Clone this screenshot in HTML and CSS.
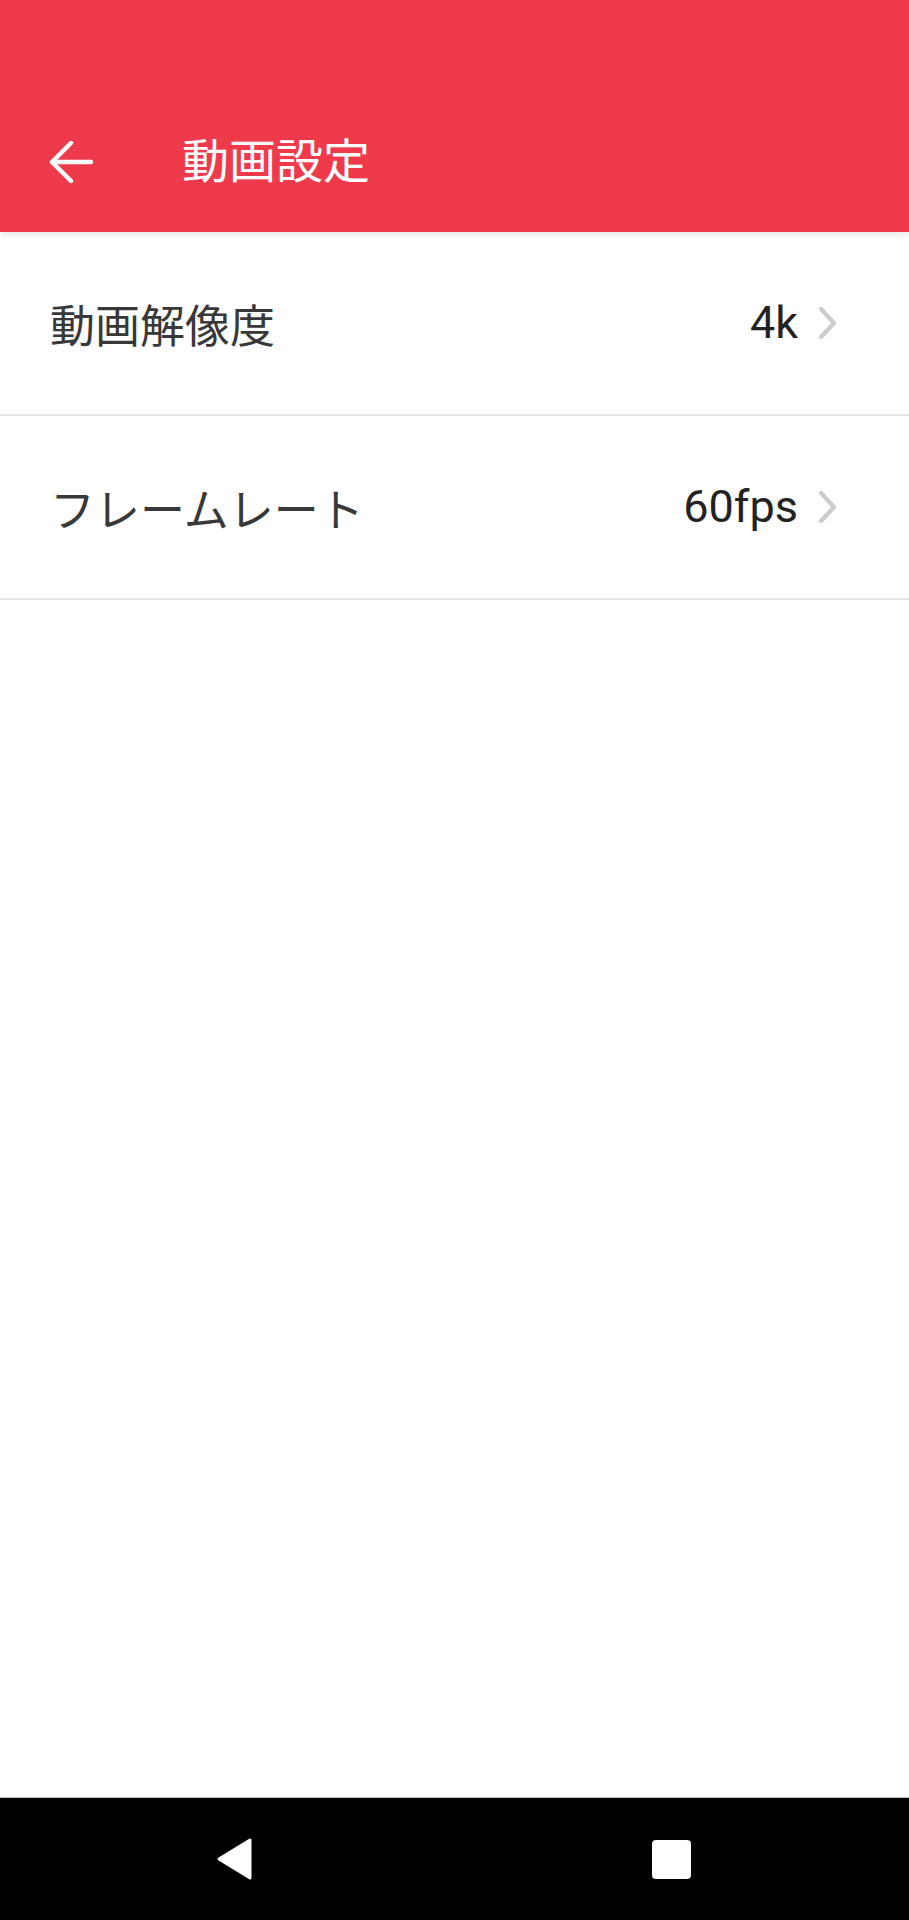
FILE: index.html
```html
<!DOCTYPE html>
<html lang="ja">
<head>
<meta charset="utf-8">
<title>動画設定</title>
<link rel="stylesheet" href="styles.css">
</head>
<body>
<div class="screen">
  <header class="appbar">
    <div class="toolbar">
      <span class="back">
        <svg width="46" height="44" viewBox="0 0 46 44">
          <path d="M4 22 H43 M23 3 L4 22 L23 41" fill="none" stroke="#fff" stroke-width="4.4" stroke-linecap="round" stroke-linejoin="round"/>
        </svg>
      </span>
      <h1 class="title">動画設定</h1>
    </div>
  </header>
  <main class="list">
    <div class="row">
      <span class="label">動画解像度</span>
      <span class="value">4k</span>
      <svg class="chev" width="22" height="34" viewBox="0 0 22 34"><path d="M4 3 L17 17 L4 31" fill="none" stroke="#cccccc" stroke-width="4.2" stroke-linecap="round" stroke-linejoin="round"/></svg>
    </div>
    <div class="row">
      <span class="label">フレームレート</span>
      <span class="value">60fps</span>
      <svg class="chev" width="22" height="34" viewBox="0 0 22 34"><path d="M4 3 L17 17 L4 31" fill="none" stroke="#cccccc" stroke-width="4.2" stroke-linecap="round" stroke-linejoin="round"/></svg>
    </div>
  </main>
  <nav class="navbar">
    <span class="nav-slot">
      <svg class="nav-back" width="40" height="44" viewBox="0 0 40 44"><path d="M35 3 L4 22 L35 41 Z" fill="#fff" stroke="#fff" stroke-width="3" stroke-linejoin="round"/></svg>
    </span>
    <span class="nav-slot"></span>
    <span class="nav-slot">
      <span class="square"></span>
    </span>
  </nav>
</div>
</body>
</html>
```

FILE: styles.css
```css
html, body {
  margin: 0;
  padding: 0;
  background: #ffffff;
}

.screen {
  width: 909px;
  height: 1920px;
  display: flex;
  flex-direction: column;
  font-family: "Noto Sans CJK JP", "Noto Sans", sans-serif;
}

.appbar {
  background: #ef3a4c;
  height: 232px;
  display: flex;
  flex-direction: column;
  justify-content: flex-end;
  box-shadow: 0 2px 8px rgba(0, 0, 0, 0.12);
  position: relative;
  z-index: 1;
  flex: none;
}

.toolbar {
  height: 140px;
  display: flex;
  align-items: center;
  padding-left: 48px;
}

.back {
  display: flex;
  width: 46px;
  height: 44px;
  margin-right: 88px;
}

.title {
  margin: 0;
  color: #ffffff;
  font-weight: 400;
  font-size: 47px;
  line-height: 1;
  padding-bottom: 10px;
}

.list {
  flex: 1;
  display: flex;
  flex-direction: column;
}

.row {
  height: 182px;
  border-bottom: 2px solid #e6e6e6;
  display: flex;
  align-items: center;
  padding: 0 70px 0 50px;
}

.label {
  flex: 1;
  font-size: 45px;
  color: #383838;
  line-height: 1;
}

.value {
  font-family: Roboto, "Liberation Sans", sans-serif;
  font-size: 45px;
  color: #222222;
  line-height: 1;
  margin-right: 19px;
  padding-bottom: 2px;
}

.chev {
  display: block;
}

.navbar {
  flex: none;
  height: 122px;
  background: #000000;
  border-top: 1px solid #bdbdbd;
  display: grid;
  grid-template-columns: repeat(3, 217px);
  justify-content: center;
  align-items: center;
}

.nav-slot {
  display: flex;
  justify-content: center;
  align-items: center;
}

.nav-back {
  margin-right: 6px;
}

.square {
  width: 39px;
  height: 39px;
  background: #ffffff;
  border-radius: 4px;
}
```
